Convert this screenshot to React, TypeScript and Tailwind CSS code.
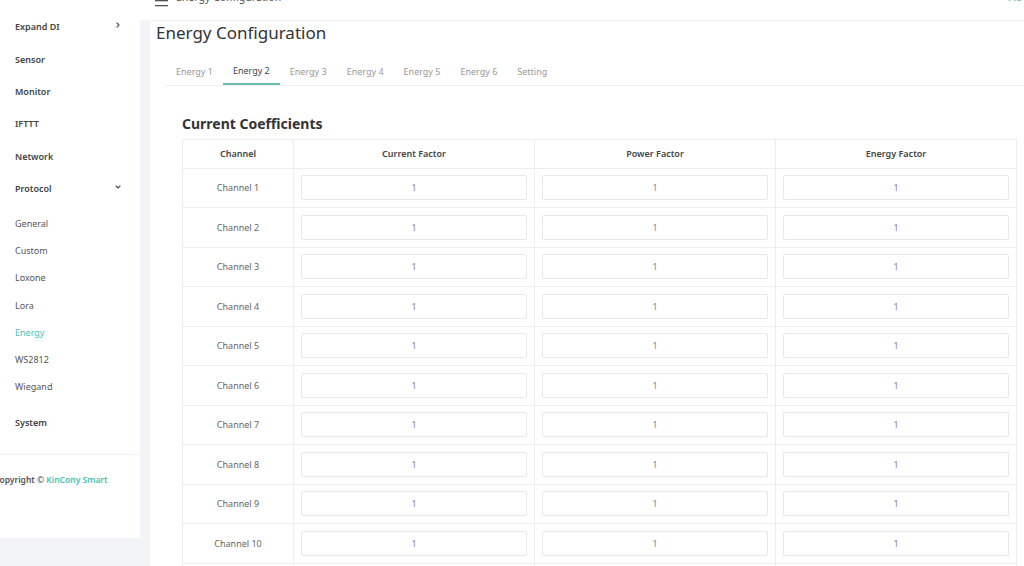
import { ChevronDown, ChevronRight } from "lucide-react";

const mainMenu = ["Expand DI", "Sensor", "Monitor", "IFTTT", "Network"];
const protocolMenu = ["General", "Custom", "Loxone", "Lora", "Energy", "WS2812", "Wiegand"];
const tabs = ["Energy 1", "Energy 2", "Energy 3", "Energy 4", "Energy 5", "Energy 6", "Setting"];
const channels = Array.from({ length: 11 }, (_, i) => `Channel ${i + 1}`);

function Sidebar() {
    return (
        <aside className="w-[140px] shrink-0 flex flex-col bg-white">
            <nav className="pt-[11px] pl-[15px] pr-[18px]">
                {mainMenu.map((item, i) => (
                    <div key={item} className="h-[32.3px] flex items-center justify-between text-[9px] font-semibold text-[#444]">
                        <span>{item}</span>
                        {i === 0 && <ChevronRight size={8} strokeWidth={3.5} className="text-[#555] -mt-[4px]" />}
                    </div>
                ))}
                <div className="h-[32.3px] flex items-center justify-between text-[9px] font-semibold text-[#444]">
                    <span>Protocol</span>
                    <ChevronDown size={8} strokeWidth={3.5} className="text-[#555] -mt-[3px]" />
                </div>
                {/* Protocol sub menu */}
                <div className="pt-[5px] pb-[6px]">
                    {protocolMenu.map((item) => (
                        <div
                            key={item}
                            className={`h-[27.3px] flex items-center text-[9px] ${
                                item === "Energy" ? "text-[#45c3b1]" : "text-[#555]"
                            }`}
                        >
                            {item}
                        </div>
                    ))}
                </div>
                <div className="h-[32px] flex items-center text-[9px] font-semibold text-[#444]">System</div>
            </nav>
            <div className="mt-[15px] border-t border-[#f2f2f4] h-[84px] pt-[19px] -ml-[6px] text-[8.5px] text-[#555] font-semibold whitespace-nowrap">
                Copyright © <span className="text-[#45c3b1]">KinCony Smart</span>
            </div>
            <div className="flex-1 bg-[#f3f4f8]" />
        </aside>
    );
}

function Header() {
    return (
        <header className="h-[21px] shrink-0 bg-white flex items-start justify-between overflow-hidden border-b border-[#f4f4f6]">
            <div className="flex items-start gap-[7px] pl-[15px] -mt-[10px]">
                <svg width="14" height="16" viewBox="0 0 14 16" className="mt-[2px]">
                    <rect x="0" y="8" width="13" height="1.3" fill="#555" />
                    <rect x="0" y="13" width="13" height="1.3" fill="#555" />
                </svg>
                <span className="text-[10.5px] text-[#555]">Energy Configuration</span>
            </div>
            <span className="-mt-[10px] pr-[2px] text-[10.5px] text-[#45c3b1]">Ad</span>
        </header>
    );
}

function CoefficientTable() {
    return (
        <table className="w-[834px] border-collapse text-[9px] text-[#666] table-fixed">
            <colgroup>
                <col className="w-[111px]" />
                <col className="w-[241px]" />
                <col className="w-[241px]" />
                <col className="w-[241px]" />
            </colgroup>
            <thead>
                <tr className="h-[28.5px]">
                    {["Channel", "Current Factor", "Power Factor", "Energy Factor"].map((h) => (
                        <th key={h} className="border border-[#eeeef0] font-semibold text-[#444]">
                            {h}
                        </th>
                    ))}
                </tr>
            </thead>
            <tbody>
                {channels.map((ch) => (
                    <tr key={ch} className="h-[39.5px]">
                        <td className="border border-[#eeeef0] text-center">{ch}</td>
                        {[0, 1, 2].map((k) => (
                            <td key={k} className="border border-[#eeeef0] px-[7px]">
                                <div className="h-[25px] border border-[#e8e8ea] rounded-[2px] flex items-center justify-center text-[#888]">
                                    1
                                </div>
                            </td>
                        ))}
                    </tr>
                ))}
            </tbody>
        </table>
    );
}

export default function App() {
    return (
        <div className="w-[1024px] h-[566px] flex overflow-hidden bg-white font-['Noto_Sans',sans-serif]">
            <Sidebar />
            <div className="flex-1 flex flex-col bg-[#f3f4f8] min-w-0">
                <Header />
                <main className="flex-1 ml-[10px] bg-white overflow-hidden">
                    <h1 className="pl-[6px] text-[17px] leading-[23px] text-[#333]">Energy Configuration</h1>
                    <div className="ml-[16px] mt-[15px] flex border-b border-[#eeeef0] text-[9px]">
                        {tabs.map((t) => (
                            <div
                                key={t}
                                className={`h-[26px] px-[10px] flex items-center ${
                                    t === "Energy 2"
                                        ? "text-[#444] border-b-2 border-[#6bb8ac] -mb-px"
                                        : "text-[#999]"
                                }`}
                            >
                                {t}
                            </div>
                        ))}
                    </div>
                    <div className="pl-[32px] pr-[8px]">
                        <h2 className="mt-[28px] mb-[5px] text-[14px] leading-[20px] font-bold text-[#333]">
                            Current Coefficients
                        </h2>
                        <CoefficientTable />
                    </div>
                </main>
            </div>
        </div>
    );
}
